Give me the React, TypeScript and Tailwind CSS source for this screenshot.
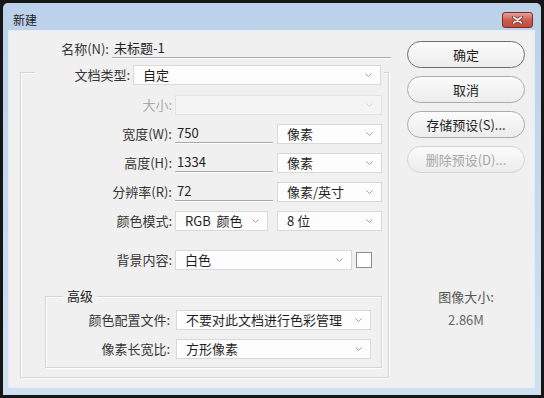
import React from 'react';

const Chevron = ({ light }: { light?: boolean }) => (
  <svg width="7" height="4" viewBox="0 0 7 4" className="shrink-0">
    <path d="M0.5 0.5 L3.5 3.5 L6.5 0.5" fill="none" stroke={light ? '#d4d4d4' : '#a2a2a2'} strokeWidth="1" />
  </svg>
);

function Select({ value, className = '', disabled }: { value?: string; className?: string; disabled?: boolean }) {
  return (
    <div
      className={`h-[20px] shrink-0 flex items-center justify-between pl-[9px] pr-[8px] border ${
        disabled ? 'border-[#e3e3e3] bg-[#f4f4f4]' : 'border-[#d8d8d8] bg-[#fdfdfd]'
      } ${className}`}
    >
      <span className="leading-[18px] text-[#1f1f1f] whitespace-pre">{value}</span>
      <Chevron light={disabled} />
    </div>
  );
}

function Field({ value, className = '' }: { value: string; className?: string }) {
  return (
    <div className={`h-[19px] shrink-0 border-b border-[#a8a8a8] shadow-[0_1px_0_#ffffff] pl-[2px] leading-[18px] text-[#1f1f1f] ${className}`}>
      {value}
    </div>
  );
}

function Label({ children, className = '', disabled }: { children: React.ReactNode; className?: string; disabled?: boolean }) {
  return (
    <div className={`shrink-0 text-right leading-[20px] whitespace-nowrap ${disabled ? 'text-[#a9a9a9]' : 'text-[#363636]'} ${className}`}>
      {children}
    </div>
  );
}

function Btn({ children, kind = 'normal' }: { children: React.ReactNode; kind?: 'primary' | 'normal' | 'disabled' }) {
  const border =
    kind === 'primary' ? 'border-[#6f6f6f]' : kind === 'disabled' ? 'border-[#d3d3d3]' : 'border-[#ababab]';
  const text = kind === 'disabled' ? 'text-[#a6a6a6]' : 'text-[#1f1f1f]';
  return (
    <div
      className={`h-[27px] w-[118px] rounded-full border ${border} ${text} bg-gradient-to-b from-[#fbfbfb] to-[#ececec] flex items-center justify-center leading-[18px]`}
    >
      {children}
    </div>
  );
}

export default function App() {
  return (
    <div className="w-[544px] h-[398px] bg-[#161616] p-[3px] font-['Noto_Sans_CJK_SC',sans-serif] text-[13px]">
      <div className="h-full flex flex-col rounded-t-[5px] bg-gradient-to-b from-[#bcd2ea] to-[#cfe0f1]">
        {/* title bar */}
        <div className="h-[27px] shrink-0 flex items-center pt-[6px] pl-[10px] pr-[8px]">
          <span className="text-[12px] text-[#1e1e1e] leading-[16px]">新建</span>
          <div className="ml-auto w-[31px] h-[16px] rounded-[3px] border border-[#7d2d25] bg-gradient-to-b from-[#e3a49c] via-[#cc5d50] to-[#c04a3d] flex items-center justify-center">
            <svg width="11" height="8" viewBox="0 0 11 8">
              <path d="M1.5 1 L9.5 7 M9.5 1 L1.5 7" stroke="#5a1d17" strokeWidth="3" strokeLinecap="round" />
              <path d="M1.5 1 L9.5 7 M9.5 1 L1.5 7" stroke="#ffffff" strokeWidth="1.6" strokeLinecap="round" />
            </svg>
          </div>
        </div>

        {/* body */}
        <div className="flex-1 ml-[5px] mr-[6px] mb-[7px] bg-[#f0f0f0] border border-[#e4ecf5] flex">
          {/* left column */}
          <div className="w-[383px] shrink-0 pl-[11px] pt-[8px]">
            <div className="flex items-start">
              <Label className="w-[89px] leading-[18px]">名称(N):</Label>
              <Field value="未标题-1" className="ml-[3px] w-[279px]" />
            </div>

            <div className="mt-[13px] w-[369px] h-[306px] border border-[#d4d4d4] shadow-[inset_1px_1px_0_#ffffff,1px_1px_0_#ffffff]">
              <div className="-mt-[8px] ml-[14px] w-[349px] flex bg-[#f0f0f0]">
                <Label className="w-[95px]">文档类型:</Label>
                <Select value="自定" className="ml-[3px] w-[248px]" />
              </div>

              <div className="mt-[10px] flex">
                <Label disabled className="w-[151px]">大小:</Label>
                <Select disabled className="ml-[3px] w-[207px]" />
              </div>

              <div className="mt-[9px] flex items-start">
                <Label className="w-[151px]">宽度(W):</Label>
                <Field value="750" className="ml-[3px] w-[98px]" />
                <Select value="像素" className="ml-[4px] w-[105px]" />
              </div>

              <div className="mt-[9px] flex items-start">
                <Label className="w-[151px]">高度(H):</Label>
                <Field value="1334" className="ml-[3px] w-[98px]" />
                <Select value="像素" className="ml-[4px] w-[105px]" />
              </div>

              <div className="mt-[9px] flex items-start">
                <Label className="w-[151px]">分辨率(R):</Label>
                <Field value="72" className="ml-[3px] w-[98px]" />
                <Select value="像素/英寸" className="ml-[4px] w-[105px]" />
              </div>

              <div className="mt-[9px] flex">
                <Label className="w-[151px]">颜色模式:</Label>
                <Select value="RGB  颜色" className="ml-[3px] w-[93px]" />
                <Select value="8 位" className="ml-[9px] w-[105px]" />
              </div>

              <div className="mt-[19px] flex items-start">
                <Label className="w-[151px]">背景内容:</Label>
                <Select value="白色" className="ml-[3px] w-[177px]" />
                <div className="ml-[4px] mt-[2px] w-[16px] h-[16px] bg-white border border-[#8d8d8d]" />
              </div>

              {/* advanced */}
              <div className="mt-[26px] ml-[24px] w-[337px] h-[72px] border border-[#d4d4d4] shadow-[inset_1px_1px_0_#ffffff,1px_1px_0_#ffffff]">
                <div className="-mt-[10px] ml-[17px] w-fit px-[4px] h-[18px] leading-[18px] bg-[#f0f0f0] text-[#222]">高级</div>
                <div className="mt-[5px] flex">
                  <Label className="w-[124px]">颜色配置文件:</Label>
                  <Select value="不要对此文档进行色彩管理" className="ml-[6px] w-[195px]" />
                </div>
                <div className="mt-[9px] flex">
                  <Label className="w-[124px]">像素长宽比:</Label>
                  <Select value="方形像素" className="ml-[6px] w-[195px]" />
                </div>
              </div>
            </div>
          </div>

          {/* right column */}
          <div className="pl-[15px] pt-[10px] flex flex-col gap-[8px]">
            <Btn kind="primary">确定</Btn>
            <Btn>取消</Btn>
            <Btn>存储预设(S)...</Btn>
            <Btn kind="disabled">删除预设(D)...</Btn>
            <div className="w-[118px] mt-[107px] text-center leading-[18px] text-[#555]">图像大小:</div>
            <div className="w-[118px] -mt-[3px] text-center leading-[18px] text-[#666]">2.86M</div>
          </div>
        </div>
      </div>
    </div>
  );
}
